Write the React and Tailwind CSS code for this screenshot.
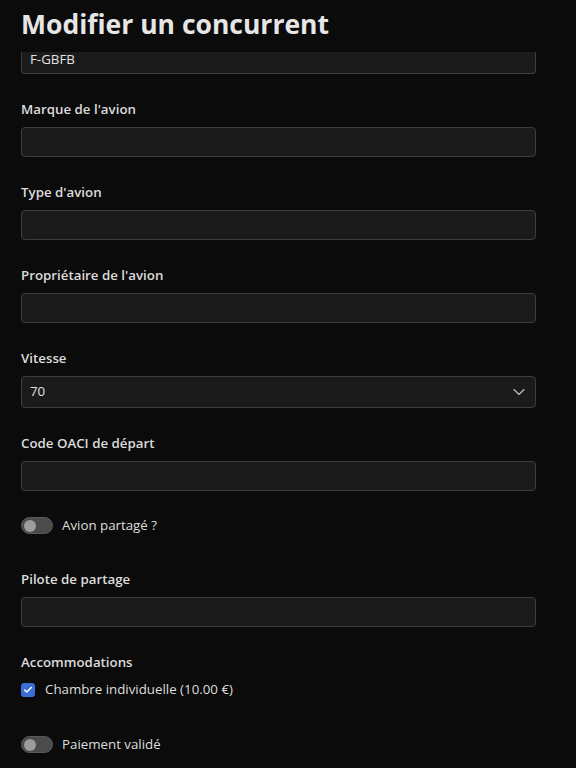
import { ChevronDown, Check } from 'lucide-react';

const font = { fontFamily: '"Open Sans", "Noto Sans", sans-serif' };

const Label = ({ children }) => (
  <div className="text-[13.3px] leading-[21px] pt-[1px] font-semibold text-[#dcdcdc] mb-[7px]">{children}</div>
);

const TextInput = ({ value = '' }) => (
  <div className="h-[30px] rounded-[4px] border border-[#3e3e3e] bg-[#1b1b1b] px-[8px] flex items-center text-[13.3px] text-[#e2e2e2]">
    {value}
  </div>
);

const Field = ({ label, value, className = '' }) => (
  <div className={className}>
    <Label>{label}</Label>
    <TextInput value={value} />
  </div>
);

const Toggle = ({ label, className = '' }) => (
  <div className={`flex items-center h-[21px] ${className}`}>
    <div className="w-[32px] h-[17px] rounded-full bg-[#4b4b4b] border border-[#5a5a5a] flex items-center px-[2px]">
      <div className="w-[12px] h-[12px] rounded-full bg-[#9c9c9c]" />
    </div>
    <span className="ml-[9px] text-[13.3px] text-[#dedede]">{label}</span>
  </div>
);

export default function App() {
  return (
    <div className="min-h-[768px] bg-[#0b0b0b] overflow-hidden" style={font}>
      <header className="h-[52px] pl-[21px] flex items-center">
        <h1 className="text-[26.5px] font-bold text-[#e6e6e6] leading-none -mt-[4px]">Modifier un concurrent</h1>
      </header>

      <div className="pl-[21px] pr-[40px]">
        {/* first input, scrolled under the header */}
        <div className="h-[22px] rounded-b-[4px] border border-t-0 border-[#3e3e3e] bg-[#1b1b1b] px-[8px] flex items-start text-[13.3px] text-[#e2e2e2] leading-[15px]">
          F-GBFB
        </div>

        <Field label="Marque de l'avion" className="mt-[24px]" />
        <Field label="Type d'avion" className="mt-[24px]" />
        <Field label="Propriétaire de l'avion" className="mt-[24px]" />

        <div className="mt-[24px]">
          <Label>Vitesse</Label>
          <div className="h-[32px] rounded-[4px] border border-[#3e3e3e] bg-[#1b1b1b] pl-[8px] pr-[6px] flex items-center justify-between text-[13.3px] text-[#e2e2e2]">
            <span>70</span>
            <ChevronDown size={20} strokeWidth={1.4} className="text-[#bdbdbd]" />
          </div>
        </div>

        <Field label="Code OACI de départ" className="mt-[24px]" />

        <Toggle label="Avion partagé ?" className="mt-[24px]" />

        <Field label="Pilote de partage" className="mt-[32px]" />

        <div className="mt-[24px]">
          <div className="text-[13.3px] leading-[21px] pt-[1px] font-semibold text-[#dcdcdc]">Accommodations</div>
          <div className="mt-[6px] flex items-center h-[21px]">
            <div className="w-[14px] h-[14px] rounded-[3px] bg-[#3a6fd8] flex items-center justify-center">
              <Check size={10} strokeWidth={3.5} className="text-white" />
            </div>
            <span className="ml-[10px] text-[13.3px] text-[#dedede]">Chambre individuelle (10.00 €)</span>
          </div>
        </div>

        <Toggle label="Paiement validé" className="mt-[34px]" />
      </div>
    </div>
  );
}
